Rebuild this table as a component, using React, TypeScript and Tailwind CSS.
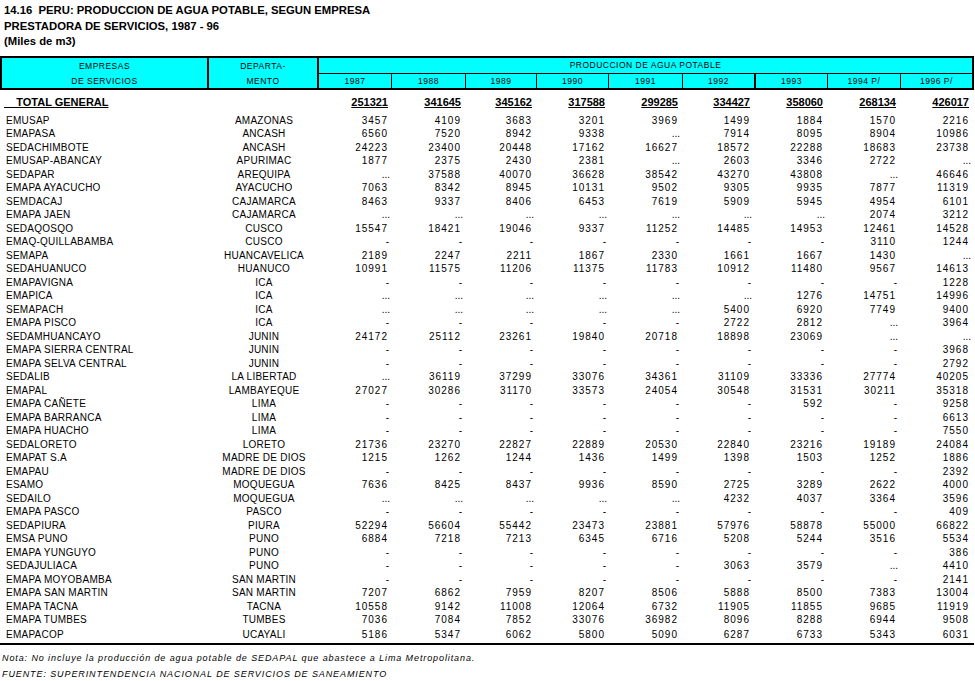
import React from "react";

const years = ["1987", "1988", "1989", "1990", "1991", "1992", "1993", "1994 P/", "1996 P/"];
const hdrCls = [
  "w-[73px] border-r border-black",
  "w-[74px] border-r border-black",
  "w-[71px] border-r border-black",
  "w-[72px] border-r border-black",
  "w-[74px] border-r border-black",
  "w-[73px] border-r-2 border-black",
  "w-[72px] border-r border-black",
  "w-[73px] border-r border-black",
  "w-[71px]",
];
const dataCls = [
  "w-[73px] pr-[4px]",
  "w-[74px] pr-[5px]",
  "w-[71px] pr-[5px]",
  "w-[72px] pr-[4px]",
  "w-[74px] pr-[5px]",
  "w-[73px] pr-[6px]",
  "w-[72px] pr-[5px]",
  "w-[73px] pr-[5px]",
  "w-[73px] pr-[5px]",
];

const totals = ["251321", "341645", "345162", "317588", "299285", "334427", "358060", "268134", "426017"];

const D = "-";
const E = "...";

const rows: string[][] = [
  ["EMUSAP", "AMAZONAS", "3457", "4109", "3683", "3201", "3969", "1499", "1884", "1570", "2216"],
  ["EMAPASA", "ANCASH", "6560", "7520", "8942", "9338", E, "7914", "8095", "8904", "10986"],
  ["SEDACHIMBOTE", "ANCASH", "24223", "23400", "20448", "17162", "16627", "18572", "22288", "18683", "23738"],
  ["EMUSAP-ABANCAY", "APURIMAC", "1877", "2375", "2430", "2381", E, "2603", "3346", "2722", E],
  ["SEDAPAR", "AREQUIPA", E, "37588", "40070", "36628", "38542", "43270", "43808", E, "46646"],
  ["EMAPA AYACUCHO", "AYACUCHO", "7063", "8342", "8945", "10131", "9502", "9305", "9935", "7877", "11319"],
  ["SEMDACAJ", "CAJAMARCA", "8463", "9337", "8406", "6453", "7619", "5909", "5945", "4954", "6101"],
  ["EMAPA JAEN", "CAJAMARCA", E, E, E, E, E, E, E, "2074", "3212"],
  ["SEDAQOSQO", "CUSCO", "15547", "18421", "19046", "9337", "11252", "14485", "14953", "12461", "14528"],
  ["EMAQ-QUILLABAMBA", "CUSCO", D, D, D, D, D, D, D, "3110", "1244"],
  ["SEMAPA", "HUANCAVELICA", "2189", "2247", "2211", "1867", "2330", "1661", "1667", "1430", E],
  ["SEDAHUANUCO", "HUANUCO", "10991", "11575", "11206", "11375", "11783", "10912", "11480", "9567", "14613"],
  ["EMAPAVIGNA", "ICA", D, D, D, D, D, D, D, D, "1228"],
  ["EMAPICA", "ICA", E, E, E, E, E, E, "1276", "14751", "14996"],
  ["SEMAPACH", "ICA", E, E, E, E, E, "5400", "6920", "7749", "9400"],
  ["EMAPA PISCO", "ICA", D, D, D, D, D, "2722", "2812", E, "3964"],
  ["SEDAMHUANCAYO", "JUNIN", "24172", "25112", "23261", "19840", "20718", "18898", "23069", E, E],
  ["EMAPA SIERRA CENTRAL", "JUNIN", D, D, D, D, D, D, D, D, "3968"],
  ["EMAPA SELVA CENTRAL", "JUNIN", D, D, D, D, D, D, D, D, "2792"],
  ["SEDALIB", "LA LIBERTAD", E, "36119", "37299", "33076", "34361", "31109", "33336", "27774", "40205"],
  ["EMAPAL", "LAMBAYEQUE", "27027", "30286", "31170", "33573", "24054", "30548", "31531", "30211", "35318"],
  ["EMAPA CAÑETE", "LIMA", D, D, D, D, D, D, "592", D, "9258"],
  ["EMAPA BARRANCA", "LIMA", D, D, D, D, D, D, D, D, "6613"],
  ["EMAPA HUACHO", "LIMA", D, D, D, D, D, D, D, D, "7550"],
  ["SEDALORETO", "LORETO", "21736", "23270", "22827", "22889", "20530", "22840", "23216", "19189", "24084"],
  ["EMAPAT S.A", "MADRE DE DIOS", "1215", "1262", "1244", "1436", "1499", "1398", "1503", "1252", "1886"],
  ["EMAPAU", "MADRE DE DIOS", D, D, D, D, D, D, D, D, "2392"],
  ["ESAMO", "MOQUEGUA", "7636", "8425", "8437", "9936", "8590", "2725", "3289", "2622", "4000"],
  ["SEDAILO", "MOQUEGUA", E, E, E, E, E, "4232", "4037", "3364", "3596"],
  ["EMAPA PASCO", "PASCO", D, D, D, D, D, D, D, D, "409"],
  ["SEDAPIURA", "PIURA", "52294", "56604", "55442", "23473", "23881", "57976", "58878", "55000", "66822"],
  ["EMSA PUNO", "PUNO", "6884", "7218", "7213", "6345", "6716", "5208", "5244", "3516", "5534"],
  ["EMAPA YUNGUYO", "PUNO", D, D, D, D, D, D, D, D, "386"],
  ["SEDAJULIACA", "PUNO", D, D, D, D, D, "3063", "3579", E, "4410"],
  ["EMAPA MOYOBAMBA", "SAN MARTIN", D, D, D, D, D, D, D, D, "2141"],
  ["EMAPA SAN MARTIN", "SAN MARTIN", "7207", "6862", "7959", "8207", "8506", "5888", "8500", "7383", "13004"],
  ["EMAPA TACNA", "TACNA", "10558", "9142", "11008", "12064", "6732", "11905", "11855", "9685", "11919"],
  ["EMAPA TUMBES", "TUMBES", "7036", "7084", "7852", "33076", "36982", "8096", "8288", "6944", "9508"],
];

const lastRow = ["EMAPACOP", "UCAYALI", "5186", "5347", "6062", "5800", "5090", "6287", "6733", "5343", "6031"];

function Val({ v }: { v: string }) {
  if (v === "...") return <span className="mr-[-2px]">...</span>;
  if (v === "-") return <span className="mr-[-1px]">-</span>;
  return <span className="tracking-[1px]">{v}</span>;
}

function DataRow({ r, h }: { r: string[]; h: string }) {
  return (
    <div className={`flex items-center ${h}`}>
      <div className="w-[209px] pl-[6px] whitespace-nowrap tracking-[0.25px]">{r[0]}</div>
      <div className="w-[110px] text-center whitespace-nowrap tracking-[0.25px]">{r[1]}</div>
      {r.slice(2).map((v, i) => (
        <div key={i} className={`${dataCls[i]} text-right whitespace-nowrap`}>
          <Val v={v} />
        </div>
      ))}
    </div>
  );
}

export default function App() {
  return (
    <div className="w-[975px] h-[681px] bg-white text-black overflow-hidden font-['Liberation_Sans',Arial,sans-serif]">
      <div className="pl-[4px] pt-[3px] text-[11.3px] font-bold leading-[15.5px] h-[56px]">
        <div className="whitespace-pre">14.16  PERU: PRODUCCION DE AGUA POTABLE, SEGUN EMPRESA</div>
        <div>PRESTADORA DE SERVICIOS, 1987 - 96</div>
        <div>(Miles de m3)</div>
      </div>

      <div className="flex w-[974px] h-[34px] border-2 border-black bg-[#00ffff] text-[8.5px] tracking-[0.5px] leading-none">
        <div className="w-[207px] border-r-2 border-black flex flex-col">
          <div className="h-[16px] flex items-center justify-center">EMPRESAS</div>
          <div className="h-[14px] flex items-center justify-center">DE SERVICIOS</div>
        </div>
        <div className="w-[110px] border-r-2 border-black flex flex-col">
          <div className="h-[16px] flex items-center justify-center">DEPARTA-</div>
          <div className="h-[14px] flex items-center justify-center">MENTO</div>
        </div>
        <div className="flex-1 flex flex-col">
          <div className="h-[16px] border-b border-black flex items-center justify-center">PRODUCCION DE AGUA POTABLE</div>
          <div className="h-[14px] flex">
            {years.map((y, i) => (
              <div key={y} className={`${hdrCls[i]} flex items-center justify-center`}>
                {y}
              </div>
            ))}
          </div>
        </div>
      </div>

      <div className="text-[10px] leading-none w-[974px]">
        <div className="flex items-center h-[24px] text-[11px] font-bold">
          <div className="w-[209px] pl-[4px]">
            <span className="underline whitespace-pre">{"    TOTAL GENERAL"}</span>
          </div>
          <div className="w-[110px]" />
          {totals.map((v, i) => (
            <div key={i} className={`${dataCls[i]} text-right`}>
              <span className="underline">{v}</span>
            </div>
          ))}
        </div>
        {rows.map((r) => (
          <DataRow key={r[0]} r={r} h="h-[13.5px]" />
        ))}
        <div className="border-b-2 border-black">
          <DataRow r={lastRow} h="h-[16px]" />
        </div>
      </div>

      <div className="pt-[5px] text-[9px] italic leading-[16px] tracking-[0.9px]">
        <div className="pl-[2px] whitespace-nowrap">
          Nota: No incluye la producción de agua potable de SEDAPAL que abastece a Lima Metropolitana.
        </div>
        <div className="pl-[2px] whitespace-nowrap">FUENTE: SUPERINTENDENCIA NACIONAL DE SERVICIOS DE SANEAMIENTO</div>
      </div>
    </div>
  );
}
